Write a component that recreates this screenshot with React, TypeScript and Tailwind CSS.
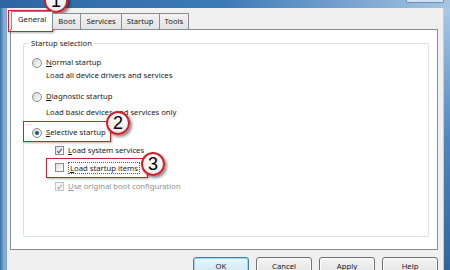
import type { ReactNode } from "react";

const TABS = ["General", "Boot", "Services", "Startup", "Tools"];
const BUTTONS = ["OK", "Cancel", "Apply", "Help"];

function Radio({ checked }: { checked?: boolean }) {
  return (
    <span className="flex h-[10px] w-[10px] shrink-0 items-center justify-center rounded-full border border-[#8b8b8b] bg-linear-to-br from-[#d9d9d9] to-[#fbfbfb]">
      {checked && <span className="h-[4px] w-[4px] rounded-full bg-[#1c5a8e]" />}
    </span>
  );
}

function Check({ checked, disabled }: { checked?: boolean; disabled?: boolean }) {
  return (
    <span
      className={
        disabled
          ? "flex h-[9px] w-[9px] shrink-0 items-center justify-center border border-[#c4c4c4] bg-[#f4f4f4]"
          : "flex h-[9px] w-[9px] shrink-0 items-center justify-center border border-[#8b8b8b] bg-linear-to-br from-[#dedede] to-white"
      }
    >
      {checked && (
        <svg viewBox="0 0 10 10" className="h-[8px] w-[8px]">
          <path
            d="M1.8 5.2 L4 7.6 L8.4 1.8"
            fill="none"
            stroke={disabled ? "#a9a9a9" : "#3d5ea0"}
            strokeWidth="1.7"
          />
        </svg>
      )}
    </span>
  );
}

function Badge({ n, className }: { n: number; className: string }) {
  return (
    <div
      className={
        "absolute flex h-[24px] w-[24px] items-center justify-center rounded-full border-[2px] border-[#d1202b] bg-linear-to-b from-white to-[#ececec] text-[18px] leading-none text-black shadow-[2px_2px_3px_rgba(0,0,0,0.45)] font-['Liberation_Sans',sans-serif] " +
        className
      }
    >
      {n}
    </div>
  );
}

function Row({ children, className = "" }: { children: ReactNode; className?: string }) {
  return <div className={"flex h-[13px] items-center gap-[4px] " + className}>{children}</div>;
}

export default function App() {
  return (
    <div className="relative h-[270px] w-[450px] overflow-hidden bg-[#4f86bf] font-['Noto_Sans',sans-serif] text-[7.7px] text-[#1a1a1a]">
      <div className="relative h-[8px] bg-linear-to-r from-[#2c67a3] via-[#3d7bb8] to-[#a6c4e2]">
        <div className="absolute right-[6px] top-0 h-[3px] w-[38px] rounded-b-[2px] border border-t-0 border-[#6c8fb5] bg-[#cfe0f0]" />
      </div>
      <div className="flex h-[262px]">
        <div className="w-[7px] border-r border-[#8a9bb0] bg-linear-to-r from-[#386b9f] via-[#6ea2d2] to-[#8cb8e0]" />
        <div className="flex flex-1 flex-col bg-[#f0f0f0] pl-[3px] pr-[5px] pt-[4px]">
          <div className="relative z-10 flex h-[17px] shrink-0 items-end pl-[1px]">
            {TABS.map((t, i) =>
              i === 0 ? (
                <div
                  key={t}
                  className="mb-[-1px] flex h-[19px] items-center border border-b-0 border-[#898c95] bg-white px-[6px] pb-[2px]"
                >
                  {t}
                </div>
              ) : (
                <div
                  key={t}
                  className="flex h-[16px] items-center border border-b-0 border-l-0 border-[#898c95] bg-linear-to-b from-[#f2f2f2] to-[#e3e3e3] px-[5px]"
                >
                  {t}
                </div>
              ),
            )}
          </div>
          <div className="h-[221px] shrink-0 border border-[#898c95] bg-white pl-[12px] pr-[8px] pt-[7px]">
            <fieldset className="h-[200px] rounded-[2px] border border-[#dae3ea] pl-[8px]">
              <legend className="ml-[-3px] px-[2px] leading-[12px]">Startup selection</legend>
              <div className="pt-[7px]">
                <Row>
                  <Radio />
                  <span>
                    <u>N</u>ormal startup
                  </span>
                </Row>
                <Row className="pl-[14px]">Load all device drivers and services</Row>
                <Row className="mt-[8px]">
                  <Radio />
                  <span>
                    <u>D</u>iagnostic startup
                  </span>
                </Row>
                <Row className="mt-[3px] pl-[14px]">Load basic devices and services only</Row>
                <Row className="mt-[7px]">
                  <Radio checked />
                  <span>
                    <u>S</u>elective startup
                  </span>
                </Row>
                <Row className="mt-[5px] pl-[23px]">
                  <Check checked />
                  <span>
                    <u>L</u>oad system services
                  </span>
                </Row>
                <Row className="mt-[4px] pl-[23px]">
                  <Check />
                  <span className="border border-dotted border-[#555] px-[1px] leading-[10px]">
                    <u>L</u>oad startup items
                  </span>
                </Row>
                <Row className="mt-[6px] pl-[23px] text-[#8f8f8f]">
                  <Check checked disabled />
                  <span>
                    <u>U</u>se original boot configuration
                  </span>
                </Row>
              </div>
            </fieldset>
          </div>
          <div className="mt-[7px] flex shrink-0 justify-end gap-[7px] pr-[0px]">
            {BUTTONS.map((b, i) => (
              <div
                key={b}
                className={
                  i === 0
                    ? "flex h-[23px] w-[56px] items-start justify-center rounded-[3px] border border-[#3c7fb1] bg-linear-to-b from-[#eaf6fd] to-[#bfe4f7] pt-[3px] shadow-[inset_0_0_0_1px_#9fd4f3]"
                    : "flex h-[23px] w-[56px] items-start justify-center rounded-[3px] border border-[#707070] bg-linear-to-b from-[#f4f4f4] to-[#dcdcdc] pt-[3px] shadow-[inset_0_0_0_1px_#fcfcfc]"
                }
              >
                {b === "Apply" ? (
                  <span>
                    <u>A</u>pply
                  </span>
                ) : (
                  b
                )}
              </div>
            ))}
          </div>
        </div>
        <div className="w-[7px] border-l border-[#c9c9c9] bg-linear-to-b from-[#a9c9e6] via-[#4f86bf] to-[#2f659d]" />
      </div>

      {/* annotations */}
      <div className="absolute left-[8px] top-[10px] h-[22px] w-[45px] border-[1.5px] border-[#d1202b] shadow-[1px_1px_2px_rgba(0,0,0,0.3)]" />
      <div className="absolute left-[23px] top-[121px] h-[21px] w-[88px] border-[1.5px] border-[#d1202b] shadow-[1px_1px_2px_rgba(0,0,0,0.3)]" />
      <div className="absolute left-[46px] top-[158px] h-[20px] w-[102px] border-[1.5px] border-[#d1202b] shadow-[1px_1px_2px_rgba(0,0,0,0.3)]" />
      <Badge n={1} className="left-[44px] top-[-11px]" />
      <Badge n={2} className="left-[106px] top-[111px]" />
      <Badge n={3} className="left-[141px] top-[152px]" />
    </div>
  );
}
